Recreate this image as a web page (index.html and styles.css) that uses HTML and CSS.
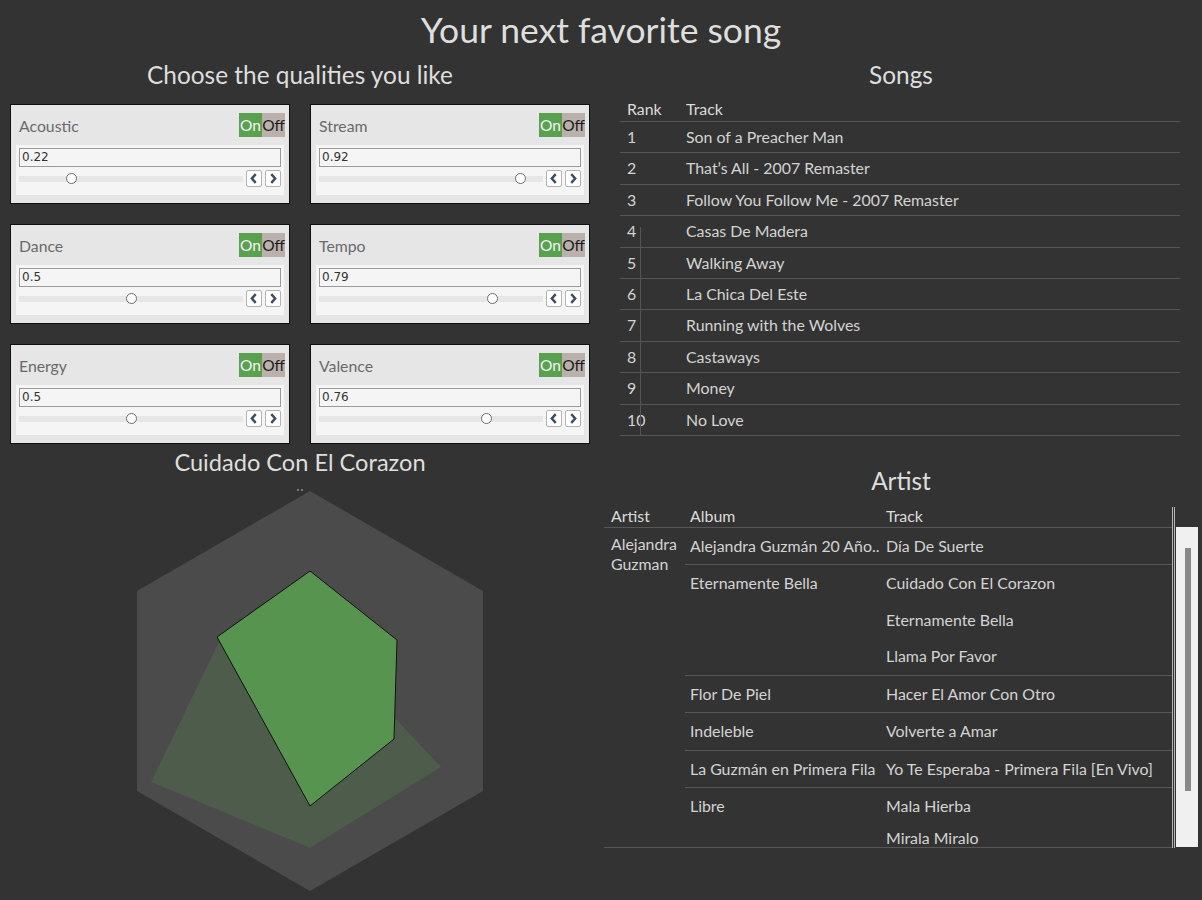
FILE: index.html
```html
<!DOCTYPE html>
<html>
<head>
<meta charset="utf-8">
<title>Your next favorite song</title>
<link rel="stylesheet" href="styles.css">
</head>
<body>
<h1 class="title">Your next favorite song</h1>
<div class="main">
  <div class="left">
    <h2 class="heading">Choose the qualities you like</h2>
    <div class="cards">
      <div class="card">
        <div class="card-head"><span class="label">Acoustic</span><span class="toggle"><span class="on">On</span><span class="off">Off</span></span></div>
        <div class="panel">
          <div class="input">0.22</div>
          <div class="slider-row">
            <div class="track"><span class="thumb" style="left:47.1px"></span></div>
            <span class="btn"><svg viewBox="0 0 16 17" width="14" height="15"><polyline points="10,3.5 5.5,8.5 10,13.5" /></svg></span>
            <span class="btn"><svg viewBox="0 0 16 17" width="14" height="15"><polyline points="6,3.5 10.5,8.5 6,13.5" /></svg></span>
          </div>
        </div>
      </div>
      <div class="card">
        <div class="card-head"><span class="label">Stream</span><span class="toggle"><span class="on">On</span><span class="off">Off</span></span></div>
        <div class="panel">
          <div class="input">0.92</div>
          <div class="slider-row">
            <div class="track"><span class="thumb" style="left:195.5px"></span></div>
            <span class="btn"><svg viewBox="0 0 16 17" width="14" height="15"><polyline points="10,3.5 5.5,8.5 10,13.5" /></svg></span>
            <span class="btn"><svg viewBox="0 0 16 17" width="14" height="15"><polyline points="6,3.5 10.5,8.5 6,13.5" /></svg></span>
          </div>
        </div>
      </div>
      <div class="card">
        <div class="card-head"><span class="label">Dance</span><span class="toggle"><span class="on">On</span><span class="off">Off</span></span></div>
        <div class="panel">
          <div class="input">0.5</div>
          <div class="slider-row">
            <div class="track"><span class="thumb" style="left:106.5px"></span></div>
            <span class="btn"><svg viewBox="0 0 16 17" width="14" height="15"><polyline points="10,3.5 5.5,8.5 10,13.5" /></svg></span>
            <span class="btn"><svg viewBox="0 0 16 17" width="14" height="15"><polyline points="6,3.5 10.5,8.5 6,13.5" /></svg></span>
          </div>
        </div>
      </div>
      <div class="card">
        <div class="card-head"><span class="label">Tempo</span><span class="toggle"><span class="on">On</span><span class="off">Off</span></span></div>
        <div class="panel">
          <div class="input">0.79</div>
          <div class="slider-row">
            <div class="track"><span class="thumb" style="left:168px"></span></div>
            <span class="btn"><svg viewBox="0 0 16 17" width="14" height="15"><polyline points="10,3.5 5.5,8.5 10,13.5" /></svg></span>
            <span class="btn"><svg viewBox="0 0 16 17" width="14" height="15"><polyline points="6,3.5 10.5,8.5 6,13.5" /></svg></span>
          </div>
        </div>
      </div>
      <div class="card">
        <div class="card-head"><span class="label">Energy</span><span class="toggle"><span class="on">On</span><span class="off">Off</span></span></div>
        <div class="panel">
          <div class="input">0.5</div>
          <div class="slider-row">
            <div class="track"><span class="thumb" style="left:106.5px"></span></div>
            <span class="btn"><svg viewBox="0 0 16 17" width="14" height="15"><polyline points="10,3.5 5.5,8.5 10,13.5" /></svg></span>
            <span class="btn"><svg viewBox="0 0 16 17" width="14" height="15"><polyline points="6,3.5 10.5,8.5 6,13.5" /></svg></span>
          </div>
        </div>
      </div>
      <div class="card">
        <div class="card-head"><span class="label">Valence</span><span class="toggle"><span class="on">On</span><span class="off">Off</span></span></div>
        <div class="panel">
          <div class="input">0.76</div>
          <div class="slider-row">
            <div class="track"><span class="thumb" style="left:161.6px"></span></div>
            <span class="btn"><svg viewBox="0 0 16 17" width="14" height="15"><polyline points="10,3.5 5.5,8.5 10,13.5" /></svg></span>
            <span class="btn"><svg viewBox="0 0 16 17" width="14" height="15"><polyline points="6,3.5 10.5,8.5 6,13.5" /></svg></span>
          </div>
        </div>
      </div>
    </div>
    <h2 class="heading radar-title">Cuidado Con El Corazon</h2>
    <svg class="radar" viewBox="0 477 600 423" width="600" height="423">
      <rect x="297" y="489" width="2" height="2" fill="#7a7a7a"/>
      <rect x="301" y="489" width="2" height="2" fill="#7a7a7a"/>
      <polygon points="310,491 483,591 483,791 310,891 137,791 137,591" fill="#4a4b4a"/>
      <polygon points="310,592 347,667 441,767 310,848 151,782 220,640" fill="#59a14f" fill-opacity="0.2"/>
      <polygon points="310,571 397,640 394,739 310,806 217,637" fill="#57974f" fill-opacity="0.96" stroke="#111" stroke-width="1"/>
    </svg>
  </div>
  <div class="right">
    <h2 class="heading">Songs</h2>
    <div class="songs">
      <div class="srow shead"><span class="rank">Rank</span><span>Track</span></div>
      <div class="srow"><span class="rank">1</span><span>Son of a Preacher Man</span></div>
      <div class="srow"><span class="rank">2</span><span>That’s All - 2007 Remaster</span></div>
      <div class="srow"><span class="rank">3</span><span>Follow You Follow Me - 2007 Remaster</span></div>
      <div class="srow"><span class="rank">4</span><span>Casas De Madera</span></div>
      <div class="srow"><span class="rank">5</span><span>Walking Away</span></div>
      <div class="srow"><span class="rank">6</span><span>La Chica Del Este</span></div>
      <div class="srow"><span class="rank">7</span><span>Running with the Wolves</span></div>
      <div class="srow"><span class="rank">8</span><span>Castaways</span></div>
      <div class="srow"><span class="rank">9</span><span>Money</span></div>
      <div class="srow"><span class="rank">10</span><span>No Love</span></div>
      <span class="vline"></span>
    </div>
    <h2 class="heading artist-title">Artist</h2>
    <div class="artist-wrap">
      <div class="atable">
        <div class="ahead"><span class="c1">Artist</span><span class="c2">Album</span><span class="c3">Track</span></div>
        <div class="abody">
          <div class="acol">Alejandra<br>Guzman</div>
          <div class="groups">
            <div class="group"><div class="album">Alejandra Guzmán 20 Año..</div><div class="tracks"><div class="trk">Día De Suerte</div></div></div>
            <div class="group"><div class="album">Eternamente Bella</div><div class="tracks"><div class="trk">Cuidado Con El Corazon</div><div class="trk">Eternamente Bella</div><div class="trk">Llama Por Favor</div></div></div>
            <div class="group"><div class="album">Flor De Piel</div><div class="tracks"><div class="trk">Hacer El Amor Con Otro</div></div></div>
            <div class="group"><div class="album">Indeleble</div><div class="tracks"><div class="trk">Volverte a Amar</div></div></div>
            <div class="group"><div class="album">La Guzmán en Primera Fila</div><div class="tracks"><div class="trk">Yo Te Esperaba - Primera Fila [En Vivo]</div></div></div>
            <div class="group last"><div class="album">Libre</div><div class="tracks"><div class="trk">Mala Hierba</div><div class="trk short">Mirala Miralo</div></div></div>
          </div>
        </div>
      </div>
      <div class="dbl"></div>
      <div class="sb-col"><div class="sb"><div class="sb-thumb"></div></div></div>
    </div>
  </div>
</div>
</body>
</html>
```
FILE: styles.css
```css
* { box-sizing: border-box; }
body {
  margin: 0;
  background: #333333;
  font-family: Lato, "Noto Sans", sans-serif;
  color: #d4d4d4;
  width: 1202px;
  height: 900px;
  overflow: hidden;
}
.title {
  margin: 0;
  height: 60px;
  line-height: 60px;
  text-align: center;
  font-size: 35.5px;
  font-weight: 400;
  color: #dedede;
}
.main { display: flex; }
.left { width: 600px; }
.right { width: 602px; }
.heading {
  margin: 0;
  height: 30px;
  line-height: 30px;
  text-align: center;
  font-size: 24.4px;
  font-weight: 400;
  color: #dedede;
}
.cards {
  display: grid;
  grid-template-columns: 280px 280px;
  gap: 20px;
  margin: 14px 0 0 10px;
}
.card {
  height: 100px;
  border: 1px solid #111;
  background: #e6e6e6;
  padding: 0 5px 8px 5px;
  display: flex;
  flex-direction: column;
}
.card-head {
  height: 40px;
  display: flex;
  align-items: center;
  justify-content: space-between;
  padding-left: 3px;
  margin-right: -1px;
}
.label { color: #6a6a6a; font-size: 15.8px; }
.toggle { display: flex; height: 24px; font-size: 15.5px; line-height: 24px; }
.on { width: 23px; background: #59a14f; color: #f2f2f2; text-align: center; }
.off { width: 23px; background: #bab0ac; color: #1a1a1a; text-align: center; }
.panel {
  height: 50px;
  background: #f5f5f5;
  padding: 3px;
}
.input {
  height: 19px;
  border: 1px solid #9a9a9a;
  background: #f5f5f5;
  font-family: "DejaVu Sans", sans-serif;
  font-size: 12px;
  line-height: 17px;
  color: #333;
  padding-left: 2px;
}
.slider-row {
  margin-top: 3px;
  height: 17px;
  display: flex;
  align-items: center;
  gap: 3px;
}
.track {
  flex: 1;
  height: 6px;
  background: #e6e6e6;
  position: relative;
}
.thumb {
  position: absolute;
  top: -2.5px;
  width: 11px;
  height: 11px;
  border-radius: 50%;
  background: #fff;
  border: 1px solid #6b6b6b;
}
.btn {
  width: 16px;
  height: 17px;
  background: #fff;
  border: 1px solid #b3b3b3;
  border-radius: 2px;
  display: flex;
  align-items: center;
  justify-content: center;
}
.btn svg polyline {
  fill: none;
  stroke: #3f4d60;
  stroke-width: 2.8;
}
.radar-title { margin-top: 3px; font-size: 23.6px; }
.radar { display: block; }

.songs {
  position: relative;
  margin: 8px 22px 0 20px;
  font-size: 15.9px;
}
.srow {
  display: flex;
  height: 31.4px;
  line-height: 29.4px;
  border-bottom: 1px solid #575757;
}
.srow.shead { height: 24px; line-height: 22px; color: #dcdcdc; }
.rank { width: 66px; padding-left: 7px; }
.vline {
  position: absolute;
  left: 20px;
  top: 129px;
  width: 1px;
  height: 209px;
  background: #555;
}
.artist-title { margin-top: 30px; }
.artist-wrap {
  display: flex;
  margin: 9px 0 0 4px;
  font-size: 15.9px;
}
.atable { width: 568px; }
.ahead {
  display: grid;
  grid-template-columns: 81px 196px 291px;
  height: 23px;
  line-height: 22px;
  border-bottom: 1px solid #575757;
  color: #dcdcdc;
}
.c1 { padding-left: 7px; }
.c2, .c3 { padding-left: 5px; }
.abody {
  display: flex;
  height: 320px;
  overflow: hidden;
  border-bottom: 1px solid #575757;
}
.acol { width: 81px; padding: 6px 0 0 7px; line-height: 20px; }
.groups { flex: 1; }
.group { display: flex; border-bottom: 1px solid #575757; }
.group.last { border-bottom: 0; }
.album { width: 196px; padding-left: 5px; line-height: 35.5px; white-space: nowrap; overflow: hidden; }
.tracks { flex: 1; }
.trk { height: 36.5px; line-height: 35.5px; padding-left: 5px; white-space: nowrap; }
.trk.short { line-height: 26px; }
.dbl {
  width: 3px;
  height: 341px;
  margin-top: 2px;
  border-left: 1px solid #b5b5b5;
  border-right: 1px solid #b5b5b5;
}
.sb-col { padding-top: 22px; margin-left: 1px; }
.sb {
  width: 22px;
  height: 320px;
  background: #f0f0f0;
  padding: 21px 0 0 9px;
}
.sb-thumb { width: 6px; height: 243px; background: #888; }
```
